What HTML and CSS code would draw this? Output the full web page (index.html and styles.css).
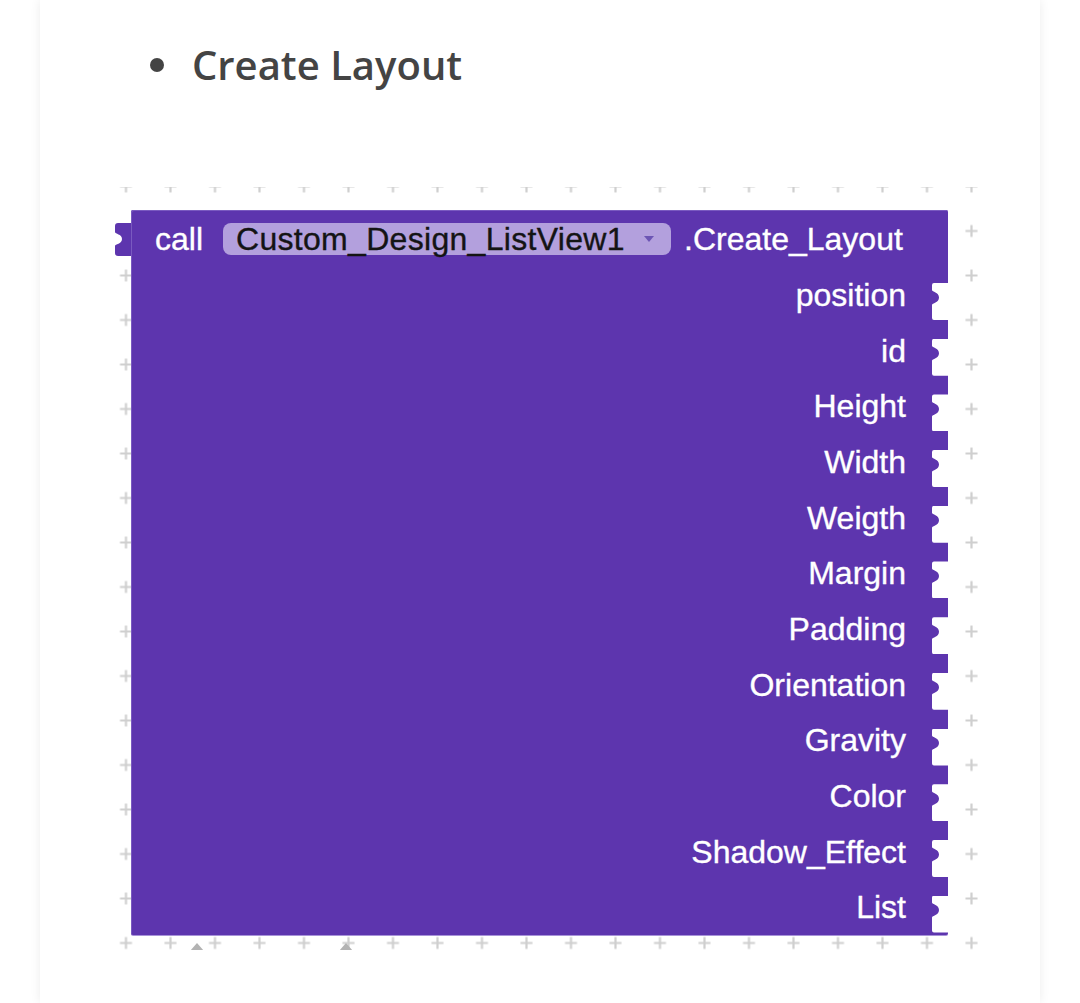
FILE: index.html
```html
<!DOCTYPE html>
<html lang="en">
<head>
<meta charset="utf-8">
<title>Create Layout</title>
<link rel="stylesheet" href="styles.css">
</head>
<body>
<main class="card">
  <ul class="steps">
    <li>Create Layout</li>
  </ul>
  <figure class="workspace">
    <svg class="grid" xmlns="http://www.w3.org/2000/svg">
      <defs>
        <pattern id="cross" width="44.5" height="44.5" patternUnits="userSpaceOnUse" x="-11.25" y="-22.75">
          <path d="M16.25 22.25h12M22.25 16.25v12" stroke="#cfcfcf" stroke-width="2.2" fill="none"/>
        </pattern>
      </defs>
      <rect width="100%" height="100%" fill="url(#cross)"/>
      <path d="M75 764 L82 756 L89 764 Z" fill="#b3b3b3"/>
      <path d="M224 764 L231 756 L238 764 Z" fill="#b3b3b3"/>
    </svg>
    <div class="block">
      <svg class="out-tab" viewBox="0 0 16 33" xmlns="http://www.w3.org/2000/svg">
        <path d="M16,0 H3 Q0,0 0,3 V9 C0,11 7,11 7,16 C7,21 0,21 0,23 V30 Q0,33 3,33 H16 Z" fill="#5d35ae"/>
      </svg>
      <div class="head">
        <span class="kw">call</span>
        <span class="pill"><span class="pill-text">Custom_Design_ListView1</span><i class="caret"></i></span>
        <span class="method">.Create_Layout</span>
      </div>
      <div class="params">
        <div class="param">position</div>
        <div class="param">id</div>
        <div class="param">Height</div>
        <div class="param">Width</div>
        <div class="param">Weigth</div>
        <div class="param">Margin</div>
        <div class="param">Padding</div>
        <div class="param">Orientation</div>
        <div class="param">Gravity</div>
        <div class="param">Color</div>
        <div class="param">Shadow_Effect</div>
        <div class="param">List</div>
      </div>
    </div>
  </figure>
</main>
</body>
</html>
```

FILE: styles.css
```css
html, body {
  margin: 0;
  padding: 0;
  background: #ffffff;
}

.card {
  width: 1000px;
  min-height: 1003px;
  margin: 0 auto;
  padding-top: 36px;
  box-sizing: border-box;
  background: #ffffff;
  box-shadow: 0 0 10px rgba(0, 0, 0, 0.08);
  overflow: hidden;
}

.steps {
  list-style: none;
  margin: 0;
  padding: 0 0 0 110px;
  font-family: "Open Sans", sans-serif;
  font-size: 40px;
  font-weight: 600;
  line-height: 57px;
  color: #444444;
}

.steps li {
  display: flex;
  align-items: center;
}

.steps li::before {
  content: "";
  width: 14px;
  height: 14px;
  border-radius: 50%;
  background: #444444;
  margin-right: 28px;
  flex: none;
}

.workspace {
  position: relative;
  margin: 94px 0 0 75px;
  width: 870px;
  height: 763px;
  padding: 23px 0 0 16px;
  box-sizing: border-box;
}

.grid {
  position: absolute;
  left: 0;
  top: 0;
  width: 100%;
  height: 100%;
  z-index: 0;
}

.block {
  position: relative;
  z-index: 1;
  width: 817px;
  background: #5d35ae;
  border-radius: 2px;
  box-shadow: inset 1px 1px 0 #7a5ac0, 0 1px 0 #a893d9;
  font-family: "Liberation Sans", Arial, sans-serif;
  font-size: 32px;
  color: #ffffff;
  -webkit-text-stroke: 0.35px currentColor;
}

.out-tab {
  position: absolute;
  left: -16px;
  top: 13px;
  width: 16px;
  height: 33px;
}

.head {
  height: 57px;
  display: flex;
  align-items: center;
  padding-left: 24px;
  line-height: 36px;
}

.pill {
  margin-left: 20px;
  width: 448px;
  height: 32px;
  box-sizing: border-box;
  padding: 0 17px 0 13px;
  display: flex;
  align-items: center;
  justify-content: space-between;
  background: #b3a0dd;
  border-radius: 8px;
  color: #141414;
}

.pill-text {
  letter-spacing: 0.3px;
}

.caret {
  width: 0;
  height: 0;
  border-left: 5px solid transparent;
  border-right: 5px solid transparent;
  border-top: 6px solid #6c55b4;
}

.method {
  margin-left: 13px;
}

.param {
  position: relative;
  height: 55.7px;
  display: flex;
  align-items: center;
  justify-content: flex-end;
  padding-right: 42px;
  line-height: 36px;
}

.param::after {
  content: "";
  position: absolute;
  right: 0;
  top: 16px;
  width: 16px;
  height: 37px;
  background: #ffffff;
  clip-path: path('M16,0 H2 Q0,0 0,2 V7 C0,9 7,9 7,14.5 C7,20 0,20 0,22 V35 Q0,37 2,37 H16 Z');
}
```
